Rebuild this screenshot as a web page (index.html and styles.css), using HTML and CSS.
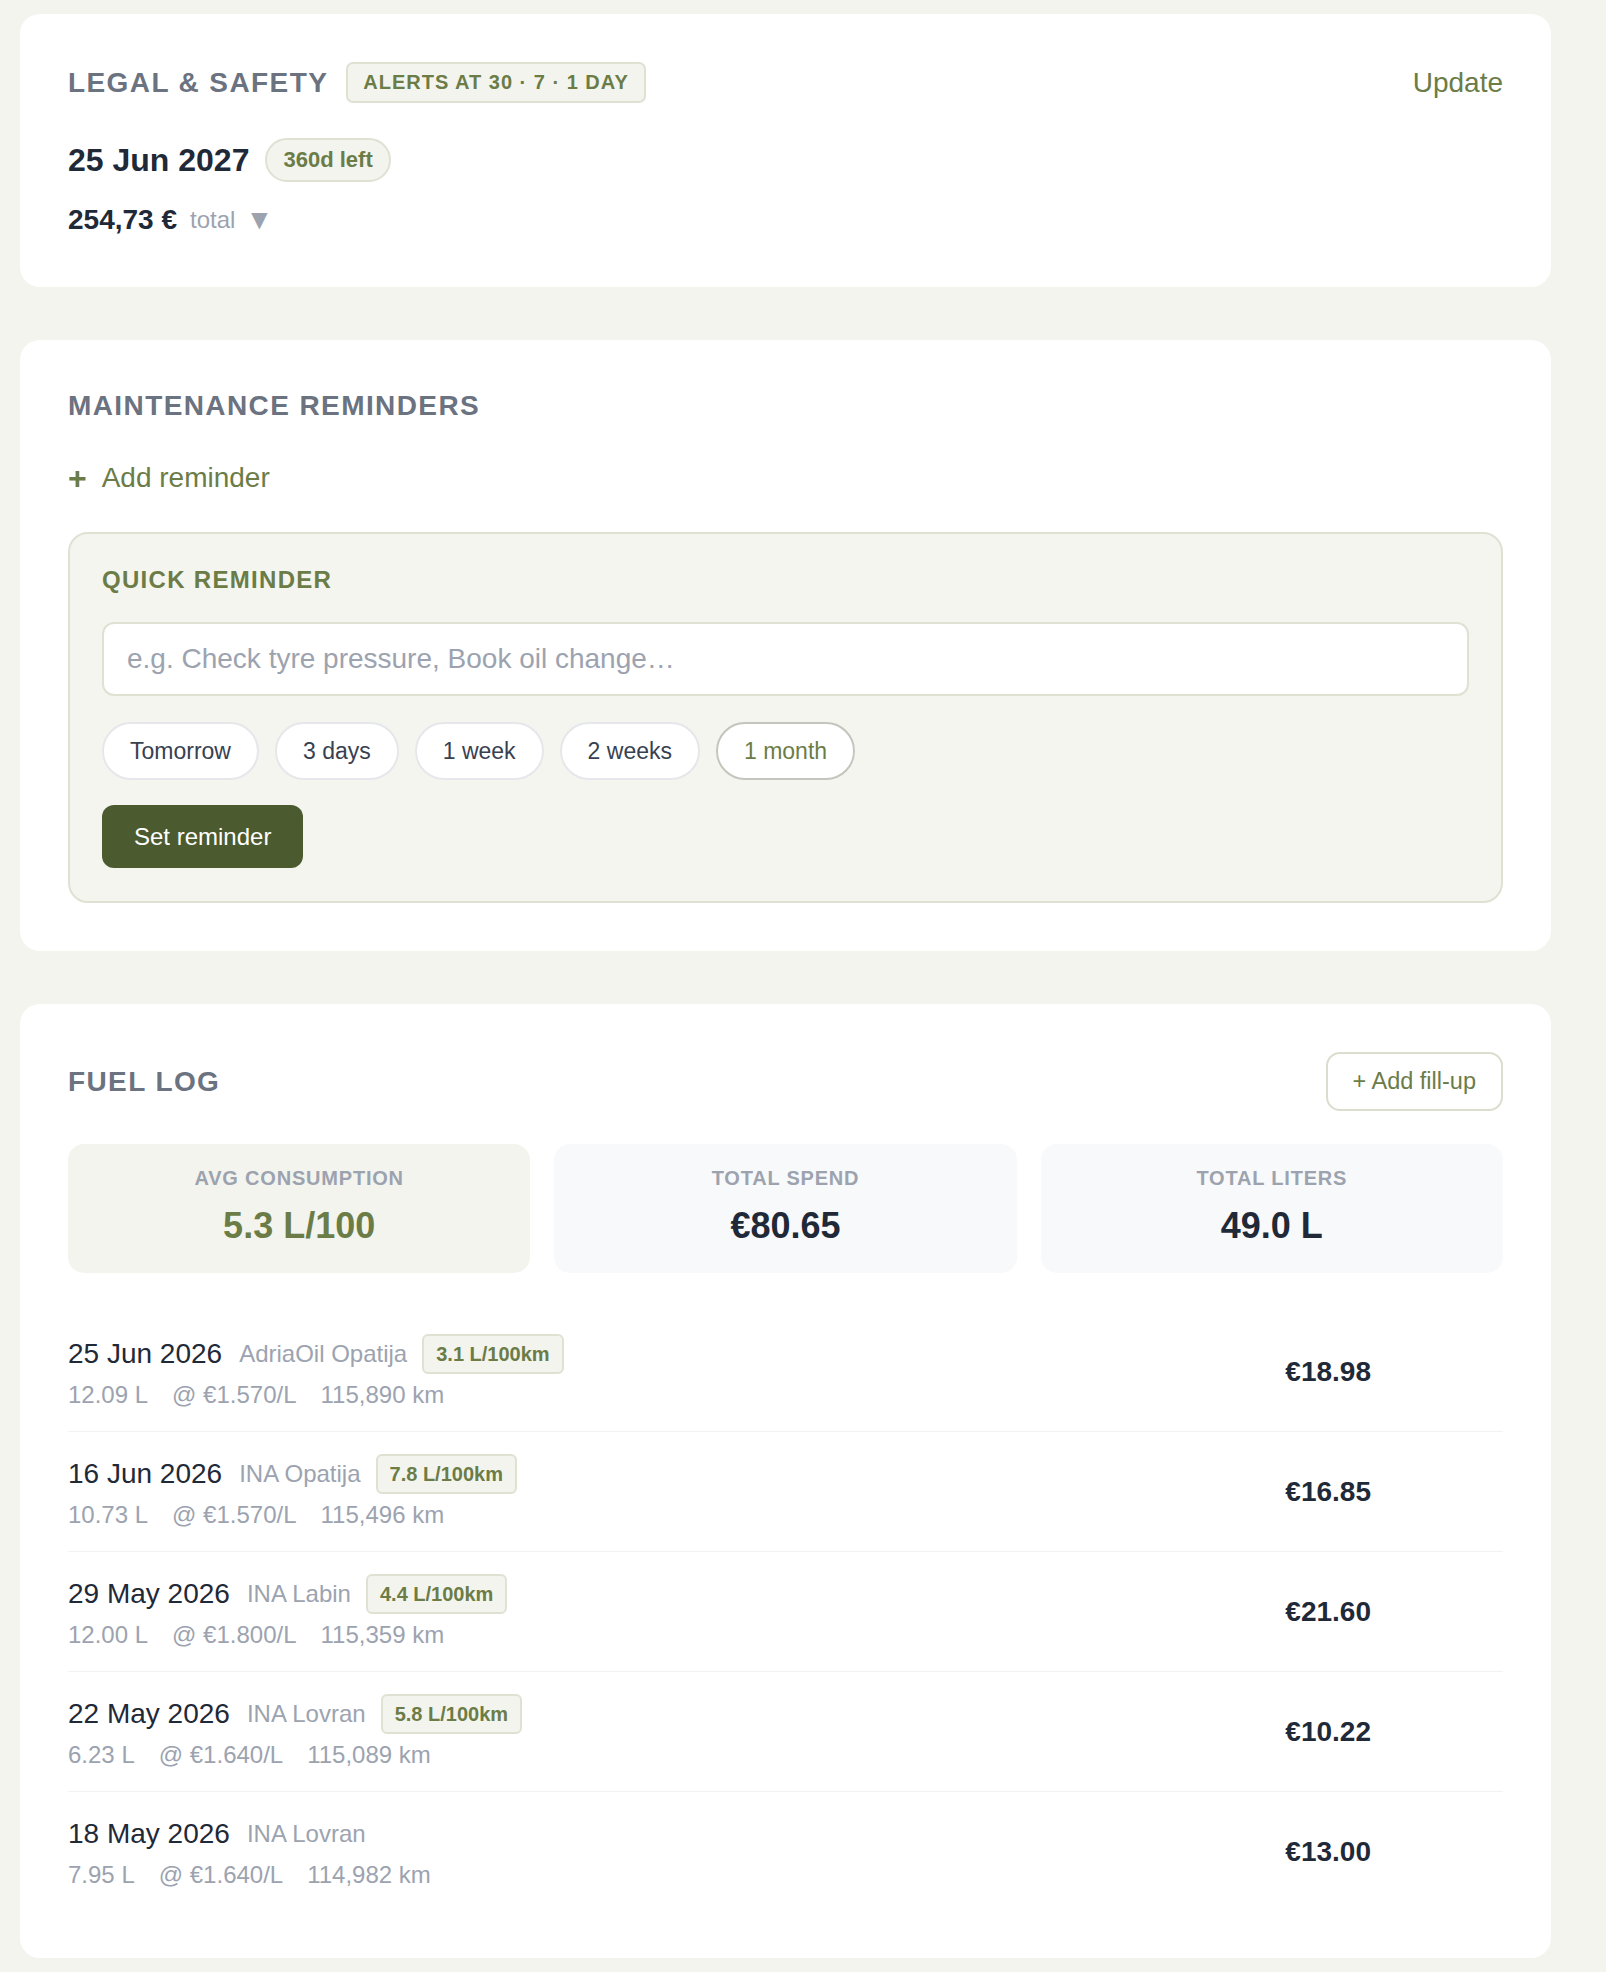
FILE: index.html
```html
<!DOCTYPE html>
<html>
<head>
    <meta charset="UTF-8">
    <title>Vehicle</title>
    <link rel="stylesheet" href="styles.css">
</head>
<body>
    <main class="page">

        <!-- Legal & safety -->
        <section class="card legal">
            <div class="card-head">
                <div class="head-left">
                    <h2 class="card-title">Legal &amp; Safety</h2>
                    <span class="tag">Alerts at 30 · 7 · 1 day</span>
                </div>
                <a href="#" class="link">Update</a>
            </div>
            <div class="expiry">
                <span class="expiry-date">25 Jun 2027</span>
                <span class="pill">360d left</span>
            </div>
            <div class="cost">
                <span class="cost-sum">254,73 €</span>
                <span class="cost-label">total</span>
                <span class="caret">▼</span>
            </div>
        </section>

        <!-- Maintenance -->
        <section class="card reminders">
            <h2 class="card-title title-line">Maintenance reminders</h2>
            <a href="#" class="add-link"><span class="plus">+</span>Add reminder</a>

            <div class="quick">
                <h3 class="quick-title">Quick reminder</h3>
                <input type="text" class="quick-input" placeholder="e.g. Check tyre pressure, Book oil change…">
                <div class="chips">
                    <button class="chip">Tomorrow</button>
                    <button class="chip">3 days</button>
                    <button class="chip">1 week</button>
                    <button class="chip">2 weeks</button>
                    <button class="chip active">1 month</button>
                </div>
                <button class="btn-primary">Set reminder</button>
            </div>
        </section>

        <!-- Fuel log -->
        <section class="card fuel">
            <div class="card-head">
                <h2 class="card-title">Fuel log</h2>
                <button class="btn-outline">+ Add fill-up</button>
            </div>

            <div class="stats">
                <div class="stat accent">
                    <div class="stat-label">Avg consumption</div>
                    <div class="stat-value">5.3 L/100</div>
                </div>
                <div class="stat">
                    <div class="stat-label">Total spend</div>
                    <div class="stat-value">€80.65</div>
                </div>
                <div class="stat">
                    <div class="stat-label">Total liters</div>
                    <div class="stat-value">49.0 L</div>
                </div>
            </div>

            <ul class="fills">
                <li class="fill">
                    <div class="fill-info">
                        <div class="fill-top">
                            <span class="fill-date">25 Jun 2026</span>
                            <span class="fill-station">AdriaOil Opatija</span>
                            <span class="eco">3.1 L/100km</span>
                        </div>
                        <div class="fill-sub"><span>12.09 L</span><span>@ €1.570/L</span><span>115,890 km</span></div>
                    </div>
                    <div class="fill-price">€18.98</div>
                    <div class="fill-actions"></div>
                </li>
                <li class="fill">
                    <div class="fill-info">
                        <div class="fill-top">
                            <span class="fill-date">16 Jun 2026</span>
                            <span class="fill-station">INA Opatija</span>
                            <span class="eco">7.8 L/100km</span>
                        </div>
                        <div class="fill-sub"><span>10.73 L</span><span>@ €1.570/L</span><span>115,496 km</span></div>
                    </div>
                    <div class="fill-price">€16.85</div>
                    <div class="fill-actions"></div>
                </li>
                <li class="fill">
                    <div class="fill-info">
                        <div class="fill-top">
                            <span class="fill-date">29 May 2026</span>
                            <span class="fill-station">INA Labin</span>
                            <span class="eco">4.4 L/100km</span>
                        </div>
                        <div class="fill-sub"><span>12.00 L</span><span>@ €1.800/L</span><span>115,359 km</span></div>
                    </div>
                    <div class="fill-price">€21.60</div>
                    <div class="fill-actions"></div>
                </li>
                <li class="fill">
                    <div class="fill-info">
                        <div class="fill-top">
                            <span class="fill-date">22 May 2026</span>
                            <span class="fill-station">INA Lovran</span>
                            <span class="eco">5.8 L/100km</span>
                        </div>
                        <div class="fill-sub"><span>6.23 L</span><span>@ €1.640/L</span><span>115,089 km</span></div>
                    </div>
                    <div class="fill-price">€10.22</div>
                    <div class="fill-actions"></div>
                </li>
                <li class="fill">
                    <div class="fill-info">
                        <div class="fill-top">
                            <span class="fill-date">18 May 2026</span>
                            <span class="fill-station">INA Lovran</span>
                        </div>
                        <div class="fill-sub"><span>7.95 L</span><span>@ €1.640/L</span><span>114,982 km</span></div>
                    </div>
                    <div class="fill-price">€13.00</div>
                    <div class="fill-actions"></div>
                </li>
            </ul>
        </section>

    </main>
</body>
</html>
```

FILE: styles.css
```css
body {
    margin: 0;
    background-color: #f3f4ee;
    font-family: "Liberation Sans", Arial, sans-serif;
    color: #1f2937;
}

.page {
    width: 1531px;
    padding: 14px 0 15px 20px;
    display: flex;
    flex-direction: column;
    gap: 53px;
}

/* cards */
.card {
    background-color: #fff;
    border-radius: 20px;
    padding: 48px;
}

.card.legal {
    padding-bottom: 49px;
}

.card.fuel {
    padding-bottom: 47px;
}

.card-head {
    display: flex;
    align-items: center;
    justify-content: space-between;
}

.head-left {
    display: flex;
    align-items: center;
    gap: 18px;
}

.card-title {
    margin: 0;
    font-size: 28px;
    line-height: 36px;
    font-weight: bold;
    letter-spacing: 0.05em;
    text-transform: uppercase;
    color: #6b7280;
}

.tag {
    display: inline-block;
    padding: 0 15px;
    height: 37px;
    line-height: 37px;
    border: 2px solid #dfe1d3;
    border-radius: 7px;
    background-color: #f3f4ee;
    color: #6b7c47;
    font-size: 20px;
    font-weight: bold;
    letter-spacing: 0.05em;
    text-transform: uppercase;
}

.link {
    color: #6b7c47;
    text-decoration: none;
    font-size: 28px;
}

/* legal */
.expiry {
    display: flex;
    align-items: center;
    gap: 16px;
    margin-top: 35px;
}

.expiry-date {
    font-size: 32px;
    font-weight: bold;
}

.pill {
    display: inline-block;
    height: 40px;
    line-height: 40px;
    padding: 0 16px;
    border: 2px solid #dfe1d3;
    border-radius: 22px;
    background-color: #f3f4ee;
    color: #6b7c47;
    font-size: 22px;
    font-weight: bold;
}

.cost {
    display: flex;
    align-items: center;
    gap: 13px;
    margin-top: 20px;
    line-height: 36px;
}

.cost-sum {
    font-size: 28px;
    font-weight: bold;
}

.cost-label {
    font-size: 24px;
    color: #9ca3af;
}

.caret {
    margin-left: -3px;
    font-size: 28px;
    color: #9ca3af;
}

/* reminders */
.add-link {
    display: inline-flex;
    align-items: center;
    margin-top: 36px;
    line-height: 36px;
    font-size: 28px;
    color: #6b7c47;
    text-decoration: none;
}

.plus {
    margin-right: 15px;
    font-size: 32px;
    font-weight: bold;
}

.quick {
    margin-top: 36px;
    border: 2px solid #dfe1d3;
    border-radius: 20px;
    background-color: #f4f5ef;
    padding: 32px 32px 33px;
}

.quick-title {
    margin: 0;
    font-size: 24px;
    line-height: 28px;
    letter-spacing: 1.3px;
    text-transform: uppercase;
    color: #6b7c47;
}

.quick-input {
    display: block;
    box-sizing: border-box;
    width: 100%;
    height: 74px;
    margin-top: 28px;
    padding: 0 23px;
    border: 2px solid #dfe1d3;
    border-radius: 12px;
    background-color: #fff;
    font-family: inherit;
    font-size: 28px;
    color: #1f2937;
}

.quick-input::placeholder {
    color: #9ca3af;
}

.chips {
    display: flex;
    gap: 16px;
    margin-top: 26px;
}

.chip {
    height: 58px;
    padding: 0 26px;
    border: 2px solid #e5e7eb;
    border-radius: 30px;
    background-color: #fff;
    font-family: inherit;
    font-size: 23px;
    color: #374151;
}

.chip.active {
    border-color: #c4c6bd;
    color: #6b7c47;
}

.btn-primary {
    display: block;
    height: 63px;
    margin-top: 25px;
    padding: 0 32px;
    border: none;
    border-radius: 12px;
    background-color: #4b5b2f;
    font-family: inherit;
    font-size: 24px;
    color: #fff;
}

/* fuel */
.btn-outline {
    height: 59px;
    padding: 0 25px;
    border: 2px solid #dcdccf;
    border-radius: 14px;
    background-color: #fff;
    font-family: inherit;
    font-size: 23.5px;
    color: #6b7c47;
}

.stats {
    display: grid;
    grid-template-columns: repeat(3, 1fr);
    gap: 24px;
    margin-top: 33px;
}

.stat {
    padding: 22px 0 26px;
    border-radius: 16px;
    background-color: #f8f9fa;
    text-align: center;
}

.stat.accent {
    background-color: #f3f4ee;
}

.stat-label {
    font-size: 20px;
    line-height: 24px;
    font-weight: bold;
    letter-spacing: 0.04em;
    text-transform: uppercase;
    color: #9ca3af;
}

.stat-value {
    margin-top: 15px;
    font-size: 36px;
    line-height: 42px;
    font-weight: bold;
    color: #1f2937;
}

.stat.accent .stat-value {
    color: #6b7c47;
}

.fills {
    list-style: none;
    margin: 39px 0 0;
    padding: 0;
}

.fill {
    display: grid;
    grid-template-columns: 1fr auto 108px;
    gap: 24px;
    align-items: center;
    padding: 22px 0 21px;
    border-bottom: 1px solid #f1f2f4;
}

.fill:last-child {
    border-bottom: none;
}

.fill-top {
    display: flex;
    align-items: center;
    gap: 17px;
    min-height: 40px;
}

.fill-date {
    font-size: 28px;
}

.fill-station {
    font-size: 24px;
    color: #9ca3af;
}

.eco {
    display: inline-block;
    height: 36px;
    line-height: 36px;
    margin-left: -2px;
    padding: 0 12px;
    border: 2px solid #dfe1d3;
    border-radius: 6px;
    background-color: #f3f4ee;
    color: #6b7c47;
    font-size: 20px;
    font-weight: bold;
}

.fill-sub {
    display: flex;
    gap: 24px;
    margin-top: 6px;
    line-height: 30px;
    font-size: 24px;
    color: #9ca3af;
}

.fill-price {
    font-size: 28px;
    font-weight: bold;
}
```
